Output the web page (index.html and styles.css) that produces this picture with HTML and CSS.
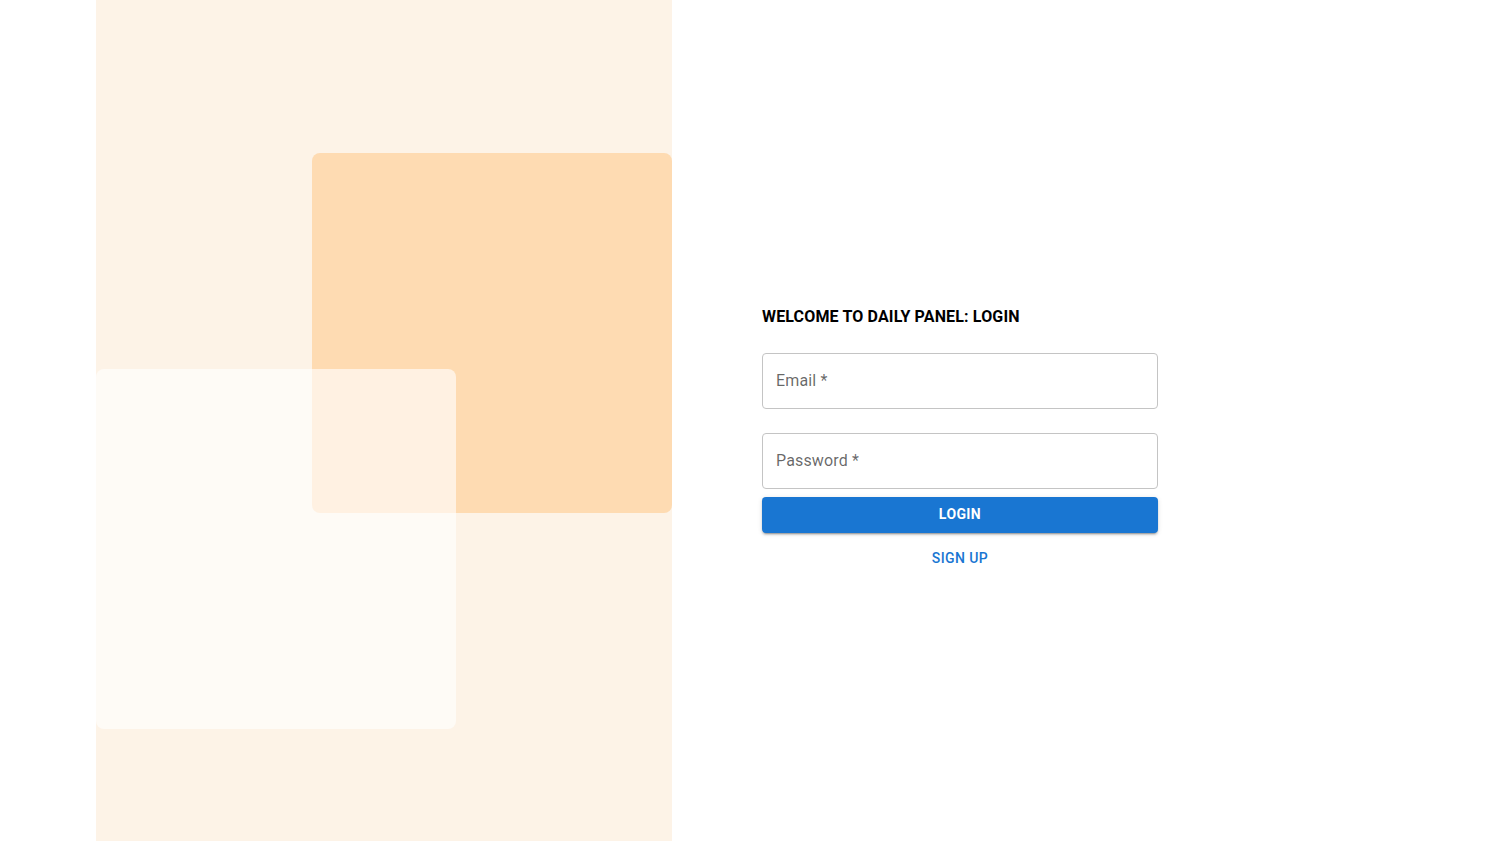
FILE: index.html
```html
<!DOCTYPE html>
<html lang="en">
<head>
<meta charset="utf-8">
<title>Daily Panel - Login</title>
<link rel="stylesheet" href="styles.css">
</head>
<body>
<div class="page">
  <div class="art">
    <div class="square square-orange"></div>
    <div class="square square-light"></div>
  </div>
  <div class="side">
    <form class="form">
      <h1 class="title">WELCOME TO DAILY PANEL: LOGIN</h1>
      <div class="field field-first"><span class="label">Email *</span></div>
      <div class="field field-second"><span class="label">Password *</span></div>
      <button type="button" class="btn-login">LOGIN</button>
      <button type="button" class="btn-signup">SIGN UP</button>
    </form>
  </div>
</div>
</body>
</html>
```

FILE: styles.css
```css
* { box-sizing: border-box; }
html, body { margin: 0; padding: 0; background: #fff; }
body { font-family: Roboto, "Liberation Sans", Arial, sans-serif; }

.page {
  display: flex;
  width: 1152px;
  margin-left: 96px;
  height: 841px;
}

.art {
  position: relative;
  width: 576px;
  height: 100%;
  background: #fdf3e7;
  flex: none;
}

.square {
  position: absolute;
  width: 360px;
  height: 360px;
  border-radius: 8px;
}
.square-orange {
  left: 216px;
  top: 153px;
  background: #fedbb2;
}
.square-light {
  left: 0;
  top: 369px;
  background: rgba(255, 255, 255, 0.62);
}

.side {
  width: 576px;
  flex: none;
  display: flex;
  justify-content: center;
  padding-top: 305px;
}

.form {
  width: 396px;
  display: flex;
  flex-direction: column;
}

.title {
  margin: 0;
  font-size: 16px;
  line-height: 24px;
  font-weight: 700;
  color: #000;
  letter-spacing: 0.15px;
}

.field {
  height: 56px;
  border: 1px solid #c4c4c4;
  border-radius: 4px;
  display: flex;
  align-items: center;
  padding-left: 13px;
  padding-bottom: 2px;
}
.field-first { margin-top: 24px; }
.field-second { margin-top: 24px; }

.label {
  font-size: 16px;
  color: rgba(0, 0, 0, 0.6);
  letter-spacing: 0.15px;
}

.btn-login {
  margin-top: 8px;
  height: 36px;
  padding: 0 0 2px;
  border: none;
  border-radius: 4px;
  background: #1976d2;
  color: #fff;
  font-family: inherit;
  font-size: 14px;
  font-weight: 700;
  letter-spacing: 0.4px;
  box-shadow: 0 3px 1px -2px rgba(0,0,0,0.2), 0 2px 2px 0 rgba(0,0,0,0.14), 0 1px 5px 0 rgba(0,0,0,0.12);
  cursor: pointer;
}

.btn-signup {
  margin-top: 7px;
  align-self: center;
  height: 36px;
  padding: 0 8px;
  border: none;
  background: transparent;
  color: #1976d2;
  font-family: inherit;
  font-size: 14px;
  font-weight: 500;
  letter-spacing: 0.4px;
  cursor: pointer;
}
```
